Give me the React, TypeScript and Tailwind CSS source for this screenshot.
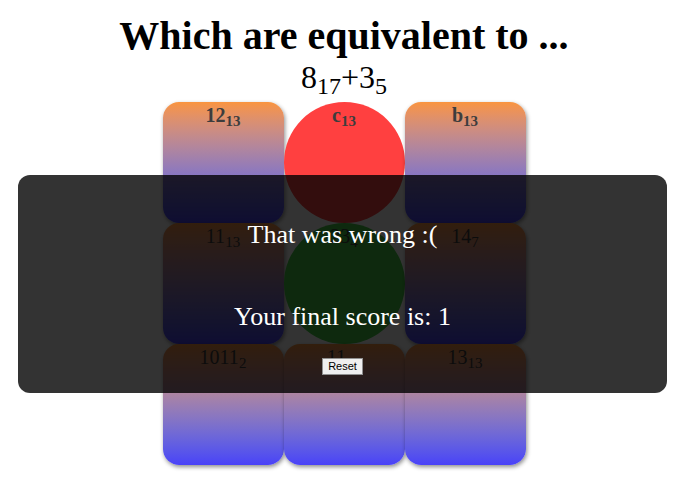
import React from 'react';

type Tile = {
  value: string;
  base: string;
  shape: 'square' | 'circle';
  color?: string;
  bold?: boolean;
};

const TILES: Tile[] = [
  { value: '12', base: '13', shape: 'square', bold: true },
  { value: 'c', base: '13', shape: 'circle', color: 'bg-[#ff4040]', bold: true },
  { value: 'b', base: '13', shape: 'square', bold: true },
  { value: '11', base: '13', shape: 'square' },
  { value: '23', base: '4', shape: 'circle', color: 'bg-[#46cc46]' },
  { value: '14', base: '7', shape: 'square' },
  { value: '1011', base: '2', shape: 'square' },
  { value: '11', base: '10', shape: 'square' },
  { value: '13', base: '13', shape: 'square' },
];

const TileCell: React.FC<{ tile: Tile }> = ({ tile }) => {
  const shapeClass =
    tile.shape === 'circle'
      ? `rounded-full ${tile.color}`
      : 'rounded-[16px] bg-gradient-to-b from-[#f9943e] to-[#4a41f8] shadow-[1px_2px_4px_rgba(0,0,0,0.45)]';
  return (
    <div className={`h-[121px] w-[121px] pt-[2px] text-center ${shapeClass}`}>
      <span className={`text-[20px] leading-[22px] text-[#3d3d3d] ${tile.bold ? 'font-bold' : 'font-normal'}`}>
        {tile.value}
        <sub>{tile.base}</sub>
      </span>
    </div>
  );
};

const App: React.FC = () => {
  return (
    <div className="relative h-[494px] w-[695px] overflow-hidden bg-white font-['Liberation_Serif',serif] text-black">
      <div className="w-[688px]">
        <h1 className="pt-[14px] text-center text-[40px] font-bold leading-[44px]">Which are equivalent to ...</h1>
        <div className="h-[44px] text-center text-[32px] leading-[38px]">
          8<sub>17</sub>+3<sub>5</sub>
        </div>
        <div className="mx-auto grid w-[363px] grid-cols-3">
          {TILES.map((tile, i) => (
            <TileCell key={i} tile={tile} />
          ))}
        </div>
      </div>

      <div className="absolute left-[18px] top-[175px] flex h-[218px] w-[649px] flex-col items-center rounded-[12px] bg-black/80 text-white">
        <p className="mt-[45px] text-[26px] leading-[29px]">That was wrong :(</p>
        <p className="mt-[53px] text-[26px] leading-[29px]">Your final score is: 1</p>
        <button className="mt-[27px] h-[17px] border border-[#8f8f8f] bg-[#efefef] px-[5px] font-['Liberation_Sans',Arial,sans-serif] text-[11px] leading-none text-black">
          Reset
        </button>
      </div>
    </div>
  );
};

export default App;
